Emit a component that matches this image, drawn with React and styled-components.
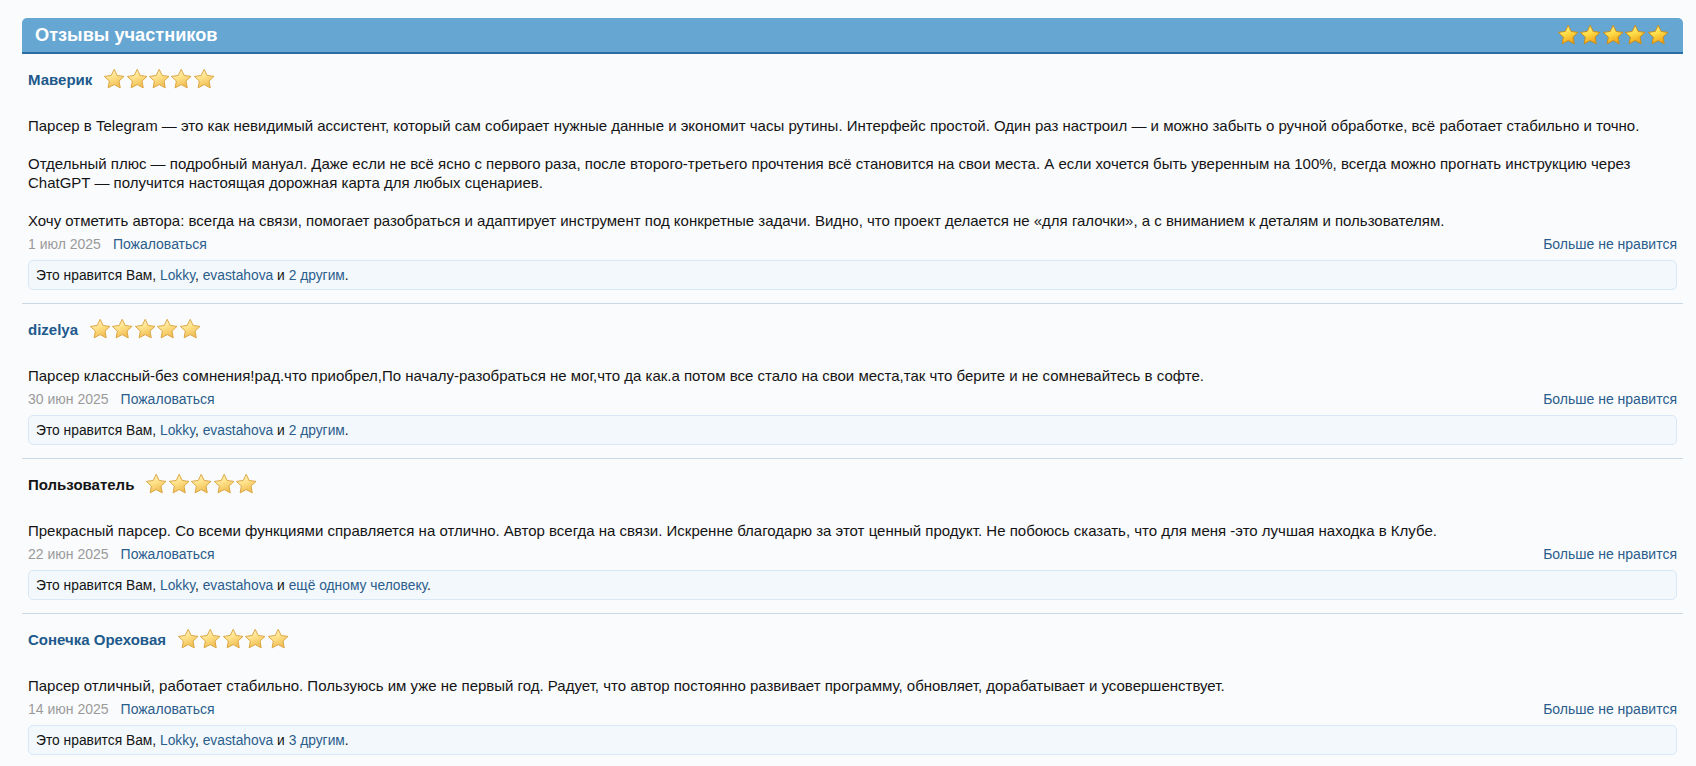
import React from "react";
import styled, { createGlobalStyle } from "styled-components";

const GlobalStyle = createGlobalStyle`
	html, body {
		margin: 0;
		padding: 0;
		background: #fafbfd;
	}
	body {
		font-family: "Liberation Sans", Arial, sans-serif;
		color: #141414;
	}
`;

const Page = styled.div`
	padding: 18px 13px 0 22px;
`;

const Block = styled.section`
	display: flex;
	flex-direction: column;
`;

const Header = styled.div`
	display: flex;
	align-items: center;
	justify-content: space-between;
	height: 34px;
	padding: 0 14px 0 13px;
	background: #65a6d2;
	border-bottom: 2px solid #2b6ca2;
	border-radius: 5px 5px 0 0;
`;

const Title = styled.h3`
	margin: 0;
	font-size: 18.2px;
	font-weight: bold;
	color: #fff;
`;

const Stars = styled.div`
	display: flex;
	align-items: center;
	height: 22px;
	margin-left: ${({ $offset }) => $offset || 0}px;
`;

const Review = styled.div`
	padding: 14px 6px 13px;
	border-top: ${({ $first }) => ($first ? "none" : "1px solid #c9d8e5")};
`;

const NameRow = styled.div`
	display: flex;
	align-items: center;
	height: 22px;
`;

const Author = styled.span`
	font-size: 15px;
	font-weight: bold;
	color: ${({ $guest }) => ($guest ? "#141414" : "#20598b")};
	cursor: ${({ $guest }) => ($guest ? "default" : "pointer")};
`;

const Message = styled.div`
	margin-top: 26px;
	font-size: 15px;
	line-height: 19px;
	color: #141414;
`;

const Meta = styled.div`
	display: flex;
	align-items: center;
	justify-content: space-between;
	margin-top: 5px;
	height: 18px;
	font-size: 14px;
`;

const MetaLeft = styled.div`
	display: flex;
	gap: 12px;
`;

const DateText = styled.span`
	color: #9a9a9a;
`;

const Link = styled.a`
	color: #2a5d8c;
	text-decoration: none;
	cursor: pointer;
`;

const Likes = styled.div`
	display: flex;
	align-items: center;
	margin-top: 7px;
	height: 28px;
	padding: 0 7px;
	border: 1px solid #d8e8f6;
	border-radius: 5px;
	background: #f3f8fc;
	font-size: 13.8px;
	color: #141414;
`;

const Star = ({ id, bright }) => (
	<svg width="22.4" height="22.4" viewBox="0 0 24 24">
		<defs>
			<linearGradient id={id} x1="0" y1="0" x2="0.4" y2="1">
				<stop offset="0" stopColor={bright ? "#fff6a8" : "#fffbe0"} />
				<stop offset="0.5" stopColor={bright ? "#ffdf4a" : "#ffe38c"} />
				<stop offset="1" stopColor={bright ? "#f0a81c" : "#f0bf55"} />
			</linearGradient>
		</defs>
		<path
			d="M12 1.4l3.2 6.6 7.3 1-5.3 5 1.3 7.3L12 17.8l-6.5 3.5 1.3-7.3-5.3-5 7.3-1z"
			fill={`url(#${id})`}
			stroke={bright ? "#c98a12" : "#d9a13a"}
			strokeWidth="1"
			strokeLinejoin="round"
		/>
	</svg>
);

const Rating = ({ name, bright, offset }) => (
	<Stars $offset={offset}>
		{[0, 1, 2, 3, 4].map((i) => (
			<Star key={i} id={`${name}-${i}`} bright={bright} />
		))}
	</Stars>
);

const reviews = [
	{
		author: "Маверик",
		date: "1 июл 2025",
		text: (
			<>
				Парсер в Telegram — это как невидимый ассистент, который сам собирает нужные данные и экономит часы рутины. Интерфейс простой. Один раз настроил — и можно забыть о ручной обработке, всё работает стабильно и точно.
				<br />
				<br />
				Отдельный плюс — подробный мануал. Даже если не всё ясно с первого раза, после второго-третьего прочтения всё становится на свои места. А если хочется быть уверенным на 100%, всегда можно прогнать инструкцию через
				<br />
				ChatGPT — получится настоящая дорожная карта для любых сценариев.
				<br />
				<br />
				Хочу отметить автора: всегда на связи, помогает разобраться и адаптирует инструмент под конкретные задачи. Видно, что проект делается не «для галочки», а с вниманием к деталям и пользователям.
			</>
		),
		others: "2 другим",
	},
	{
		author: "dizelya",
		date: "30 июн 2025",
		text: "Парсер классный-без сомнения!рад.что приобрел,По началу-разобраться не мог,что да как.а потом все стало на свои места,так что берите и не сомневайтесь в софте.",
		others: "2 другим",
	},
	{
		author: "Пользователь",
		guest: true,
		date: "22 июн 2025",
		text: "Прекрасный парсер. Со всеми функциями справляется на отлично. Автор всегда на связи. Искренне благодарю за этот ценный продукт. Не побоюсь сказать, что для меня -это лучшая находка в Клубе.",
		others: "ещё одному человеку",
	},
	{
		author: "Сонечка Ореховая",
		date: "14 июн 2025",
		text: "Парсер отличный, работает стабильно. Пользуюсь им уже не первый год. Радует, что автор постоянно развивает программу, обновляет, дорабатывает и усовершенствует.",
		others: "3 другим",
	},
];

export default function App() {
	return (
		<>
			<GlobalStyle />
			<Page>
				<Block>
					<Header>
						<Title>Отзывы участников</Title>
						<Rating name="head" bright />
					</Header>
					{reviews.map((r, i) => (
						<Review key={i} $first={i === 0}>
							<NameRow>
								<Author $guest={r.guest}>{r.author}</Author>
								<Rating name={`r${i}`} offset={11} />
							</NameRow>
							<Message>{r.text}</Message>
							<Meta>
								<MetaLeft>
									<DateText>{r.date}</DateText>
									<Link>Пожаловаться</Link>
								</MetaLeft>
								<Link>Больше не нравится</Link>
							</Meta>
							<Likes>
								<span>
									Это нравится Вам, <Link>Lokky</Link>, <Link>evastahova</Link> и <Link>{r.others}</Link>.
								</span>
							</Likes>
						</Review>
					))}
				</Block>
			</Page>
		</>
	);
}
